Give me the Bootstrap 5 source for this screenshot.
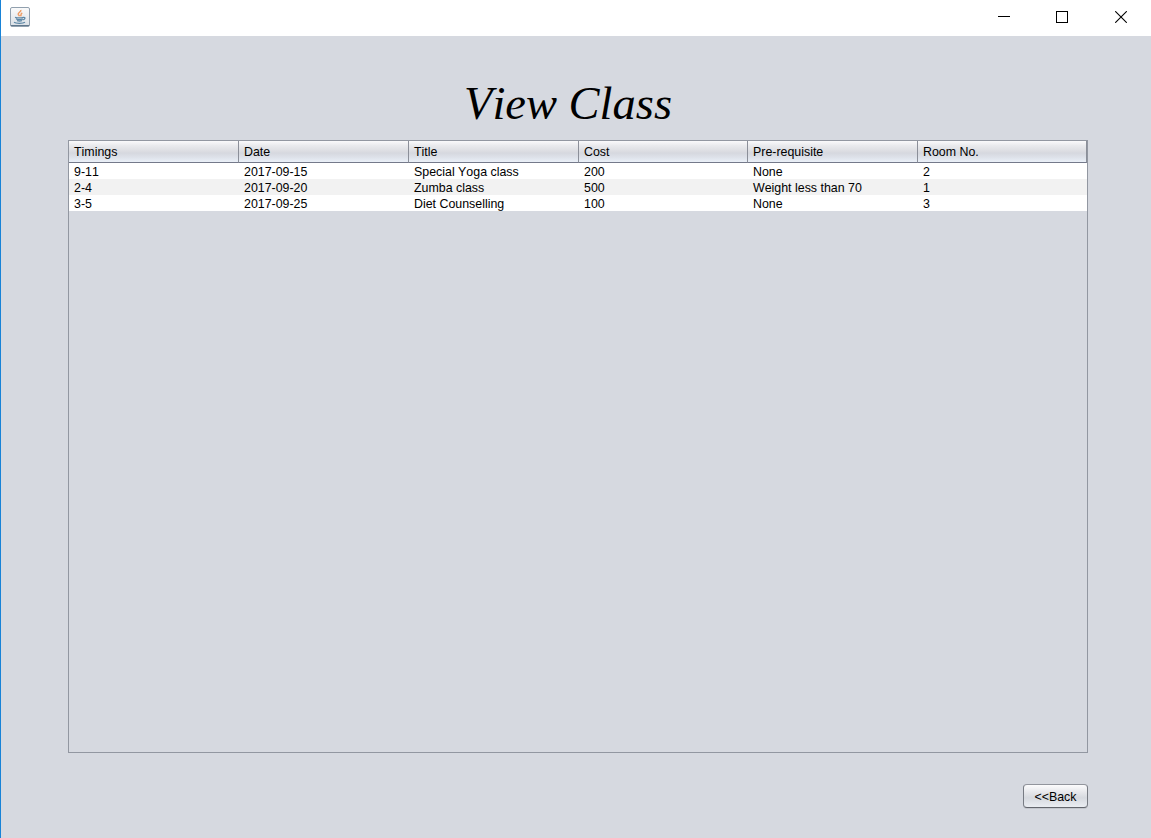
<!DOCTYPE html>
<html lang="en">
<head>
<meta charset="utf-8">
<title>View Class</title>
<link rel="stylesheet" href="https://cdn.jsdelivr.net/npm/bootstrap@5.3.0/dist/css/bootstrap.min.css">
<style>
body{background:#d6d9e0;color:#000;font:12px/16px "Liberation Sans",sans-serif;font-kerning:none;overflow:hidden}
.app-window{width:1151px;height:838px;border-left:1px solid #1883d7}
.title-bar{height:36px;flex:none;padding-left:9px}
.app-icon{margin-top:-3px}
.win-controls{gap:46px;margin-right:24px;margin-top:-2px}
.win-controls svg:last-child{margin-left:1px}
.view-title{font:italic 46.5px/56px "Liberation Serif",serif;font-kerning:none;margin:40px 16px 8px 0;height:56px;text-align:center}
.class-pane{margin:0 63px 0 67px;width:1020px;height:613px;border:1px solid #9297a1}
.class-table{table-layout:fixed;width:1018px;border-collapse:separate;border-spacing:0;margin:0;font-size:12.4px}
.class-table th{height:22px;padding:1px 5px 0;font-weight:400;line-height:20px;border-right:1px solid #8b8f99;border-bottom:1px solid #74798a;background:linear-gradient(#fafafb 0%,#e9eaed 22%,#dcdde2 48%,#d6d8df 58%,#dfe3eb 80%,#eaf0f8 100%)}
.class-table td{height:16px;padding:2px 5px 0;line-height:14px;background:#fff;white-space:nowrap}
.class-table tr:nth-child(even) td{background:#f2f2f2}
.back-btn{width:65px;height:24px;padding:2px 0 0;border:1px solid #777b83;border-top-color:#92959d;border-bottom-color:#63666d;border-radius:4px;color:#000;font-size:12.4px;line-height:20px;background:linear-gradient(#fcfcfd,#e5e6ea 35%,#d6d9df 58%,#eaedf2 100%);box-shadow:0 1px 0 #c3c6cd;margin:31px 63px 0 0}
</style>
</head>
<body>
<div class="app-window d-flex flex-column">
  <header class="title-bar bg-white d-flex align-items-center justify-content-between">
    <svg class="app-icon" width="20" height="20" viewBox="0 0 20 20" fill="none">
      <defs><linearGradient id="tile" x1="0" y1="0" x2="0" y2="1"><stop stop-color="#fbfbfb"/><stop offset="1" stop-color="#d9dfe5"/></linearGradient></defs>
      <rect x=".5" y=".5" width="19" height="19" rx="1.5" fill="url(#tile)" stroke="#91a0ae"/>
      <path d="M1 18.5h18" stroke="#60788d"/>
      <path d="M10.800 3c.7 2-3.300 2.500-2.500 4.500.3.700 1 1 1.200 1.700M12.300 5.800c-2.500 1.300-.4 2-1.800 3.500" stroke="#ee9a61" stroke-width="1.500"/>
      <path d="M5 10.300c2 .7 6.500.6 8.500 0M6 12c1.900.6 5 .6 6.800 0M7 13.700c1.600.5 3.600.5 5 0M13.200 10.500c2.600-.5 2.200 1.900-.6 2.400M4 15.300c2 1.400 9 1.300 11 0" stroke="#5d87a5" stroke-width="1.250"/>
    </svg>
    <div class="win-controls d-flex align-items-center">
      <svg width="12" height="12" shape-rendering="crispEdges"><path d="M0 5h12v1H0z"/></svg>
      <svg width="12" height="12" fill="none" stroke="#000" shape-rendering="crispEdges"><path d="M.5.500h11v11H.5z"/></svg>
      <svg width="12" height="12" stroke="#000" stroke-width="1.100"><path d="M.2.200l11.600 11.600M11.800.200L.2 11.800"/></svg>
    </div>
  </header>
  <h1 class="view-title">View Class</h1>
  <main class="class-pane">
    <table class="class-table">
      <colgroup><col style="width:170px"><col style="width:170px"><col style="width:170px"><col style="width:169px"><col style="width:170px"><col style="width:169px"></colgroup>
      <thead><tr><th>Timings</th><th>Date</th><th>Title</th><th>Cost</th><th>Pre-requisite</th><th>Room No.</th></tr></thead>
      <tbody>
        <tr><td>9-11</td><td>2017-09-15</td><td>Special Yoga class</td><td>200</td><td>None</td><td>2</td></tr>
        <tr><td>2-4</td><td>2017-09-20</td><td>Zumba class</td><td>500</td><td>Weight less than 70</td><td>1</td></tr>
        <tr><td>3-5</td><td>2017-09-25</td><td>Diet Counselling</td><td>100</td><td>None</td><td>3</td></tr>
      </tbody>
    </table>
  </main>
  <button type="button" class="btn back-btn align-self-end">&lt;&lt;Back</button>
</div>
<script src="https://cdn.jsdelivr.net/npm/bootstrap@5.3.0/dist/js/bootstrap.bundle.min.js"></script>
</body>
</html>
